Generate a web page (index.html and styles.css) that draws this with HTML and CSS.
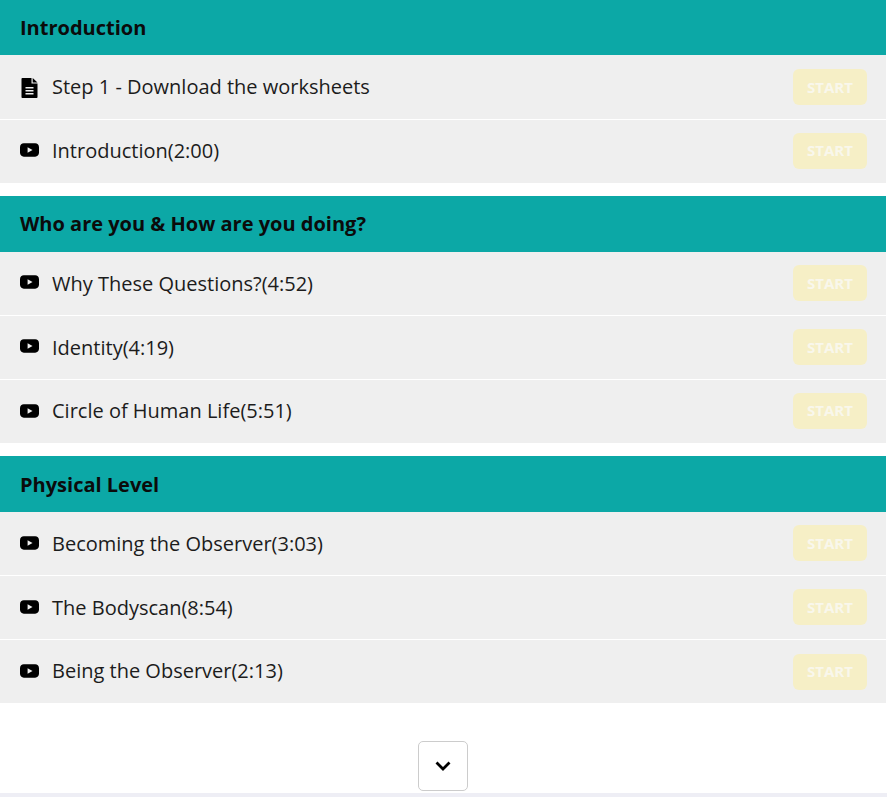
FILE: index.html
```html
<!DOCTYPE html>
<html lang="en">
<head>
    <meta charset="UTF-8">
    <title>Course curriculum</title>
    <link rel="stylesheet" href="styles.css">
</head>
<body>
    <svg class="icon-defs" width="0" height="0" aria-hidden="true">
        <symbol id="icon-video" viewBox="0 0 20 14">
            <path fill-rule="evenodd" d="M4 0H16C18.2 0 20 1.8 20 4V10C20 12.2 18.2 14 16 14H4C1.8 14 0 12.2 0 10V4C0 1.8 1.8 0 4 0ZM8 4V10L13.2 7Z"/>
        </symbol>
        <symbol id="icon-file" viewBox="0 0 16 20">
            <path fill-rule="evenodd" d="M.8 0H10V5.5H16V19.2C16 19.6 15.6 20 15.2 20H.8C.4 20 0 19.6 0 19.2V.8C0 .4 .4 0 .8 0ZM11.2 0L16 4.4H11.2ZM4 9V10.4H12V9ZM4 12V13.4H12V12ZM4 15V16.4H12V15Z"/>
        </symbol>
    </svg>

    <main class="curriculum">
        <section class="section">
            <h2 class="section-title">Introduction</h2>
            <div class="lesson">
                <svg class="lesson-icon file"><use href="#icon-file"></use></svg>
                <span class="lesson-name">Step 1 - Download the worksheets</span>
                <a class="start-btn">START</a>
            </div>
            <div class="lesson">
                <svg class="lesson-icon"><use href="#icon-video"></use></svg>
                <span class="lesson-name">Introduction(2:00)</span>
                <a class="start-btn">START</a>
            </div>
        </section>

        <section class="section">
            <h2 class="section-title">Who are you &amp; How are you doing?</h2>
            <div class="lesson">
                <svg class="lesson-icon"><use href="#icon-video"></use></svg>
                <span class="lesson-name">Why These Questions?(4:52)</span>
                <a class="start-btn">START</a>
            </div>
            <div class="lesson">
                <svg class="lesson-icon"><use href="#icon-video"></use></svg>
                <span class="lesson-name">Identity(4:19)</span>
                <a class="start-btn">START</a>
            </div>
            <div class="lesson">
                <svg class="lesson-icon"><use href="#icon-video"></use></svg>
                <span class="lesson-name">Circle of Human Life(5:51)</span>
                <a class="start-btn">START</a>
            </div>
        </section>

        <section class="section">
            <h2 class="section-title">Physical Level</h2>
            <div class="lesson">
                <svg class="lesson-icon"><use href="#icon-video"></use></svg>
                <span class="lesson-name">Becoming the Observer(3:03)</span>
                <a class="start-btn">START</a>
            </div>
            <div class="lesson">
                <svg class="lesson-icon"><use href="#icon-video"></use></svg>
                <span class="lesson-name">The Bodyscan(8:54)</span>
                <a class="start-btn">START</a>
            </div>
            <div class="lesson">
                <svg class="lesson-icon"><use href="#icon-video"></use></svg>
                <span class="lesson-name">Being the Observer(2:13)</span>
                <a class="start-btn">START</a>
            </div>
        </section>

        <div class="more">
            <button class="more-btn" type="button" aria-label="Show more">
                <svg width="16" height="10" viewBox="0 0 16 10"><path d="M1.5 1.5L8 8L14.5 1.5" fill="none" stroke="#000" stroke-width="2.8"/></svg>
            </button>
        </div>
    </main>
    <div class="page-end"></div>
</body>
</html>
```

FILE: styles.css
```css
html, body {
    margin: 0;
    padding: 0;
}

body {
    font-family: "Open Sans", "Liberation Sans", sans-serif;
    background: #fff;
    color: #1c1c1c;
    height: 797px;
    overflow: hidden;
}

.icon-defs {
    display: block;
    height: 0;
}

.curriculum {
    width: 886px;
}

.section {
    margin-bottom: 13.45px;
}

.section-title {
    margin: 0;
    height: 55.4px;
    padding: 0 20px;
    display: flex;
    align-items: center;
    background: #0ca8a6;
    color: #0b0b0b;
    font-size: 20px;
    font-weight: 700;
}

.lesson {
    height: 63.15px;
    padding: 0 19px 0 20px;
    display: flex;
    align-items: center;
    background: #efefef;
    border-bottom: 1px solid #fff;
}

.lesson:last-child {
    border-bottom: 0;
}

.lesson-icon {
    width: 19px;
    height: 14px;
    margin: -1.6px 13px 0 0;
    flex: none;
}

.lesson-icon.file {
    height: 20px;
    margin-top: 2px;
}

.lesson-name {
    flex: 1;
    font-size: 20px;
}

.lesson:last-child .lesson-name {
    margin-bottom: 2px;
}

.section:first-child .lesson:first-child .lesson-name {
    margin-top: 3px;
}

.start-btn {
    box-sizing: border-box;
    width: 74px;
    height: 36px;
    display: flex;
    align-items: center;
    justify-content: center;
    background: #f6efc6;
    border-radius: 6px;
    color: #f9f7ec;
    font-size: 15px;
    font-weight: 700;
}

.lesson:last-child .start-btn {
    padding-bottom: 2px;
}

.section:first-child .lesson:first-child .start-btn {
    padding-top: 1px;
}

.more {
    display: flex;
    justify-content: center;
    padding-top: 24.3px;
}

.more-btn {
    width: 50px;
    height: 50px;
    padding: 0;
    display: flex;
    align-items: center;
    justify-content: center;
    background: #fff;
    border: 1px solid #ccc;
    border-radius: 5px;
}

.page-end {
    height: 4px;
    margin-top: 2px;
    background: #eeeef5;
}
```
